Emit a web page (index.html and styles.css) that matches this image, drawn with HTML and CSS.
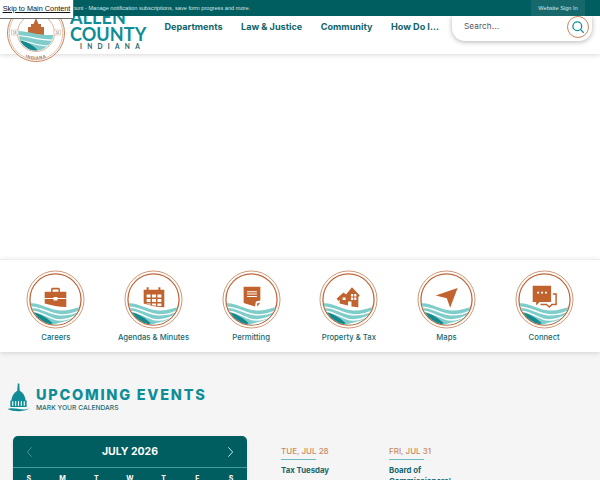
FILE: index.html
```html
<!DOCTYPE html>
<html lang="en">
<head>
<meta charset="utf-8">
<title>Allen County, Indiana</title>
<link rel="stylesheet" href="styles.css">
</head>
<body>
<svg class="defs" width="0" height="0" aria-hidden="true">
  <defs>
    <clipPath id="inner"><circle cx="30" cy="30" r="25.500"/></clipPath>
    <clipPath id="seal-inner"><circle cx="30" cy="30" r="17.500"/></clipPath>
    <symbol id="badge" viewBox="0 0 60 60">
      <circle cx="30" cy="30" r="29" fill="#fff" stroke="#c17a50" stroke-width=".8"/>
      <circle cx="30" cy="30" r="26" fill="#fff" stroke="#c0673a" stroke-width="1.300"/>
      <g clip-path="url(#inner)">
        <path d="M4 34C14 33 22 40 33 41C42 42 49 39 57 37V56H4Z" fill="#7fcdcb"/>
        <path d="M4 38C13 37 21 43 31 45C40 47 48 44 56 41" fill="none" stroke="#fff" stroke-width="1.500"/>
        <path d="M4 42C12 41 20 47 29 50C36 52 44 50 52 46" fill="none" stroke="#fff" stroke-width="1.500"/>
        <path d="M4 42.500C11 42.500 20 47.500 27 54C22 58 12 57 4 50Z" fill="#16898f"/>
        <path d="M25 57C32 53 44 53 56 45V58H25Z" fill="#fff"/>
      </g>
    </symbol>
  </defs>
</svg>

<a class="skip" href="#main">Skip to Main Content</a>

<div class="topbar">
  <span class="topbar-msg">Create an Account - Manage notification subscriptions, save form progress and more.</span>
  <a class="signin" href="#">Website Sign In</a>
</div>

<header class="header">
  <a class="logo" href="#">
    <svg class="seal" viewBox="0 0 60 60" aria-hidden="true">
      <defs>
        <path id="seal-top" d="M7.500 30A22.500 22.500 0 0 1 52.500 30"/>
        <path id="seal-bottom" d="M3.500 30A26.500 26.500 0 0 0 56.500 30"/>
      </defs>
      <circle cx="30" cy="30" r="28.500" fill="#fff" stroke="#c9855c" stroke-width="1"/>
      <circle cx="30" cy="30" r="26.800" fill="none" stroke="#c9855c" stroke-width=".5"/>
      <circle cx="30" cy="30" r="18.500" fill="#fff" stroke="#c9855c" stroke-width=".6"/>
      <path d="M22 31V24H25V21H27.500L30 15L32.500 21H35V24H38V32Z" fill="#bd6a37"/>
      <g clip-path="url(#seal-inner)">
        <path d="M10 28C20 27 30 33 50 32V50H10Z" fill="#7fcdcb"/>
        <path d="M11 33C20 31 30 38 49 37M13 38C21 37 28 43 44 43" fill="none" stroke="#fff" stroke-width="1.100"/>
        <path d="M12 37C20 38 28 42 33 49H12Z" fill="#16898f"/>
      </g>
      <text class="seal-text"><textPath href="#seal-top" startOffset="50%" text-anchor="middle">ALLEN COUNTY</textPath></text>
      <text class="seal-text"><textPath href="#seal-bottom" startOffset="50%" text-anchor="middle">INDIANA</textPath></text>
      <rect x="5.500" y="27" width="6.500" height="5" fill="#fff" stroke="#c9855c" stroke-width=".4"/>
      <rect x="48" y="27" width="6.500" height="5" fill="#fff" stroke="#c9855c" stroke-width=".4"/>
      <text class="seal-num" x="8.750" y="30.600" text-anchor="middle">18</text>
      <text class="seal-num" x="51.250" y="30.600" text-anchor="middle">24</text>
    </svg>
    <span class="wordmark">
      <span class="word-big">ALLEN</span>
      <span class="word-big">COUNTY</span>
      <span class="word-small">INDIANA</span>
    </span>
  </a>
  <nav class="nav">
    <a href="#">Departments</a>
    <a href="#">Law &amp; Justice</a>
    <a href="#">Community</a>
    <a href="#">How Do I...</a>
  </nav>
  <div class="search">
    <span class="search-text">Search...</span>
    <span class="search-btn">
      <svg viewBox="0 0 16 16" width="14" height="14" fill="none" stroke="#0f8d96" stroke-width="1.500" aria-hidden="true"><circle cx="7.200" cy="7.200" r="5"/><path d="M11 11L14.500 14.500"/></svg>
    </span>
  </div>
</header>

<section class="hero"></section>

<section class="services">
  <a class="service" href="#">
    <span class="badge">
      <svg viewBox="0 0 60 60" aria-hidden="true"><use href="#badge"/>
        <path class="ico" fill-rule="evenodd" d="M19 22H25.500V19.500C25.500 18.700 26.200 18 27 18H33C33.800 18 34.500 18.700 34.500 19.500V22H41V37.500C33 37.500 26 36 19 34ZM27 19.800V22H33V19.800ZM19 28.500H28V27.500H32V28.500H41V29.400H32V31H28V29.400H19Z"/>
      </svg>
    </span>
    <span class="service-label">Careers</span>
  </a>
  <a class="service" href="#">
    <span class="badge">
      <svg viewBox="0 0 60 60" aria-hidden="true"><use href="#badge"/>
        <path class="ico" fill-rule="evenodd" d="M20 20H23V17.500H25V20H35V17.500H37V20H41V38C34 38 27 36 20 34ZM23 25V28H27V25ZM28.500 25V28H32.500V25ZM34 25V28H38V25ZM23 29.500V32.500H27V29.500ZM28.500 29.500V32.500H32.500V29.500ZM34 29.500V32.500H38V29.500ZM23 34V34.500L27 35.300V34ZM28.500 34V35.800L32.500 36.300V34ZM34 34V36.500H38V34Z"/>
      </svg>
    </span>
    <span class="service-label">Agendas &amp; Minutes</span>
  </a>
  <a class="service" href="#">
    <span class="badge">
      <svg viewBox="0 0 60 60" aria-hidden="true"><use href="#badge"/>
        <path class="ico" fill-rule="evenodd" d="M22 17H39V31L34.500 32L33.500 37L22 33.500ZM25.500 21.500V22.500H35.500V21.500ZM25.500 24V25H35.500V24ZM25.500 26.500V27.500H35.500V26.500Z"/>
        <path class="ico" d="M35.500 34L39 33L36 37Z"/>
      </svg>
    </span>
    <span class="service-label">Permitting</span>
  </a>
  <a class="service" href="#">
    <span class="badge">
      <svg viewBox="0 0 60 60" aria-hidden="true"><use href="#badge"/>
        <path class="ico" fill-rule="evenodd" d="M18 29L25 23L27.500 25L33.500 17.500L41.500 26L40 27.500V38L33 37V32H29.500V36L21 34V30.500L19.500 31.500ZM32.500 24.500V27H34.800V24.500ZM35.800 24.500V27H38V24.500ZM32.500 28V30.500H34.800V28ZM35.800 28V30.500H38V28ZM24 28V30.500H27V28Z"/>
      </svg>
    </span>
    <span class="service-label">Property &amp; Tax</span>
  </a>
  <a class="service" href="#">
    <span class="badge">
      <svg viewBox="0 0 60 60" aria-hidden="true"><use href="#badge"/>
        <path class="ico" d="M19 26L41.300 18.300L33.700 38.300L30.300 28.700Z"/>
      </svg>
    </span>
    <span class="service-label">Maps</span>
  </a>
  <a class="service" href="#">
    <span class="badge">
      <svg viewBox="0 0 60 60" aria-hidden="true"><use href="#badge"/>
        <path class="ico" fill-rule="evenodd" d="M18 16H36.700V32.500H25L21.500 36V32.500H18ZM22.500 22V24H24.500V22ZM26.500 22V24H28.500V22ZM30.500 22V24H32.500V22Z"/>
        <path class="ico-line" d="M38.500 24.500H41.800V35H37.500L35 37.700L32 35H26"/>
      </svg>
    </span>
    <span class="service-label">Connect</span>
  </a>
</section>

<main class="events" id="main">
  <div class="events-head">
    <svg class="capitol" viewBox="0 0 24 30" aria-hidden="true">
      <path d="M11.200 0.500H12.800L13.300 8C17 10 19 14 19.500 18H20.500V25H3.500V18H4.500C5 14 7 10 10.700 8Z" fill="#0f8d96"/>
      <path d="M6 19V23.500M9 19V23.500M12 19V23.500M15 19V23.500M18 19V23.500" stroke="#fff" stroke-width="1.200" fill="none"/>
      <path d="M0.500 27C7 24.500 16 29.500 23.500 26.500C17 30.500 7 30 0.500 27Z" fill="#0f8d96"/>
    </svg>
    <div>
      <h2 class="events-title">UPCOMING EVENTS</h2>
      <p class="events-sub">MARK YOUR CALENDARS</p>
    </div>
  </div>
  <div class="events-body">
    <div class="calendar">
      <div class="cal-head">
        <svg class="chev" viewBox="0 0 8 14" aria-hidden="true"><path d="M6.500 1.500L1.500 7L6.500 12.500" stroke="#4f9a9c"/></svg>
        <span class="cal-month">JULY 2026</span>
        <svg class="chev" viewBox="0 0 8 14" aria-hidden="true"><path d="M1.500 1.500L6.500 7L1.500 12.500" stroke="#dff"/></svg>
      </div>
      <div class="cal-days">
        <span>S</span><span>M</span><span>T</span><span>W</span><span>T</span><span>F</span><span>S</span>
      </div>
    </div>
    <div class="event">
      <div class="event-date">TUE, JUL 28</div>
      <a class="event-name" href="#">Tax Tuesday</a>
    </div>
    <div class="event">
      <div class="event-date">FRI, JUL 31</div>
      <a class="event-name" href="#">Board of Commissioners'</a>
    </div>
  </div>
</main>
</body>
</html>
```
FILE: styles.css
```css
* { box-sizing: border-box; }
html, body { height: 480px; overflow: hidden; }
body {
  margin: 0;
  background: #f5f5f5;
  font-family: "Inter", "Liberation Sans", sans-serif;
  position: relative;
}
a { color: inherit; text-decoration: none; }
.defs { position: absolute; }

.skip {
  position: absolute;
  left: 0;
  top: 0;
  z-index: 5;
  width: 74px;
  height: 19px;
  background: #fff;
  border: 1px solid #666;
  border-top: 0;
  border-left: 0;
  color: #111;
  font: 7.300px/18px "Liberation Sans", sans-serif;
  text-decoration: underline;
  text-align: center;
  white-space: nowrap;
}

.topbar {
  position: relative;
  z-index: 3;
  height: 16px;
  background: #005d60;
  color: #d5e6e6;
  display: flex;
  justify-content: space-between;
  padding-left: 37px;
  padding-right: 15px;
  font: 5.650px/16px "Liberation Sans", sans-serif;
}
.topbar-msg { white-space: nowrap; }
.signin {
  width: 54px;
  text-align: center;
  background: #17686b;
}

.header {
  position: relative;
  z-index: 2;
  height: 38px;
  background: #fff;
  box-shadow: 0 1px 5px rgba(0, 0, 0, .16);
  display: flex;
  align-items: flex-start;
}
.logo {
  display: flex;
  width: 164px;
  flex: none;
  height: 38px;
  padding-left: 6px;
}
.seal {
  width: 60px;
  height: 60px;
  margin-top: -13px;
  flex: none;
}
.seal-text { font: 700 4.400px "Liberation Sans", sans-serif; letter-spacing: .5px; fill: #a86a46; }
.seal-num { font: 3px "Liberation Sans", sans-serif; fill: #7a4a30; }
.wordmark {
  display: flex;
  flex-direction: column;
  margin-left: 4px;
  margin-top: -7px;
  color: #0f8d96;
  font-family: "Lato", sans-serif;
}
.word-big {
  font-size: 18px;
  line-height: 17px;
  font-weight: 700;
  letter-spacing: .1px;
}
.word-small {
  font-size: 6.500px;
  line-height: 8px;
  font-weight: 700;
  letter-spacing: 5.300px;
  color: #1c5f63;
  padding-left: 10px;
}

.nav {
  display: flex;
  gap: 18.500px;
  padding: 5px 0 0 .5px;
  width: 288px;
  flex: none;
  color: #11646a;
  font-size: 9.100px;
  line-height: 12px;
  font-weight: 700;
  white-space: nowrap;
}

.search {
  width: 140px;
  height: 25px;
  flex: none;
  background: #fff;
  border-radius: 0 0 13px 13px;
  box-shadow: 0 1px 5px rgba(0, 0, 0, .3);
  display: flex;
  align-items: flex-start;
  justify-content: space-between;
  padding: 0 3px 0 12px;
}
.search-text { color: #555; font-size: 8.200px; line-height: 20px; letter-spacing: .1px; }
.search-btn {
  width: 22px;
  height: 22px;
  border-radius: 50%;
  border: 1px solid #c9855c;
  background: #fff;
  display: flex;
  align-items: center;
  justify-content: center;
}

.hero { height: 205px; background: #fff; }

.services {
  height: 93px;
  background: #fff;
  border-top: 1px solid #eee;
  box-shadow: 0 1px 5px rgba(0, 0, 0, .15);
  display: grid;
  grid-template-columns: repeat(6, 1fr);
  padding: 0 7px;
  position: relative;
}
.service {
  display: flex;
  flex-direction: column;
  align-items: center;
  padding-top: 9.500px;
}
.badge { width: 59px; height: 59px; display: block; }
.badge svg { width: 100%; height: 100%; display: block; }
.ico { fill: #c0632e; }
.ico-line { fill: none; stroke: #c0632e; stroke-width: 1.500; }
.service-label {
  margin-top: 3.500px;
  color: #17686d;
  font-size: 7.700px;
  line-height: 11px;
  font-weight: 500;
  white-space: nowrap;
}

.events { padding: 34px 13px 0 7px; }
.events-head { display: flex; align-items: flex-start; gap: 6px; }
.capitol { width: 23px; height: 29px; flex: none; margin-top: -3px; }
.events-title {
  margin: 0;
  color: #0f8d96;
  font-size: 14.500px;
  line-height: 18px;
  font-weight: 800;
  letter-spacing: 1.750px;
  white-space: nowrap;
}
.events-sub {
  margin: -1px 0 0;
  color: #1c6a70;
  font-size: 6.700px;
  line-height: 10px;
  font-weight: 500;
}
.events-body { display: flex; margin-top: 23px; padding-left: 6px; }
.calendar {
  width: 234px;
  flex: none;
  background: #005d60;
  border-radius: 5px 5px 0 0;
  color: #fff;
  margin-right: 34px;
  box-shadow: 0 1px 3px rgba(0, 0, 0, .15);
}
.cal-head {
  height: 32px;
  border-bottom: 1px solid #3f9c9f;
  display: flex;
  align-items: center;
  justify-content: space-between;
  padding: 0 13px;
}
.chev { width: 7px; height: 12px; fill: none; stroke-width: 1; }
.cal-month { font-size: 10.500px; font-weight: 700; }
.cal-days {
  display: grid;
  grid-template-columns: repeat(7, 1fr);
  padding: 6px 0 16px;
  margin: 0 -1px;
  font-size: 7px;
  line-height: 10px;
  font-weight: 700;
  text-align: center;
}
.event { width: 108px; flex: none; padding-top: 10px; }
.event-date {
  color: #c98a63;
  font-size: 8px;
  line-height: 10px;
  font-weight: 500;
  white-space: nowrap;
  padding-bottom: 4px;
  margin-bottom: 5px;
  position: relative;
}
.event-date::after {
  content: "";
  position: absolute;
  left: 0;
  bottom: 0;
  width: 35px;
  height: 1px;
  background: #69bcc0;
}
.event-name {
  display: block;
  width: 70px;
  color: #15666c;
  font-size: 7.800px;
  line-height: 10.500px;
  font-weight: 700;
}
```
